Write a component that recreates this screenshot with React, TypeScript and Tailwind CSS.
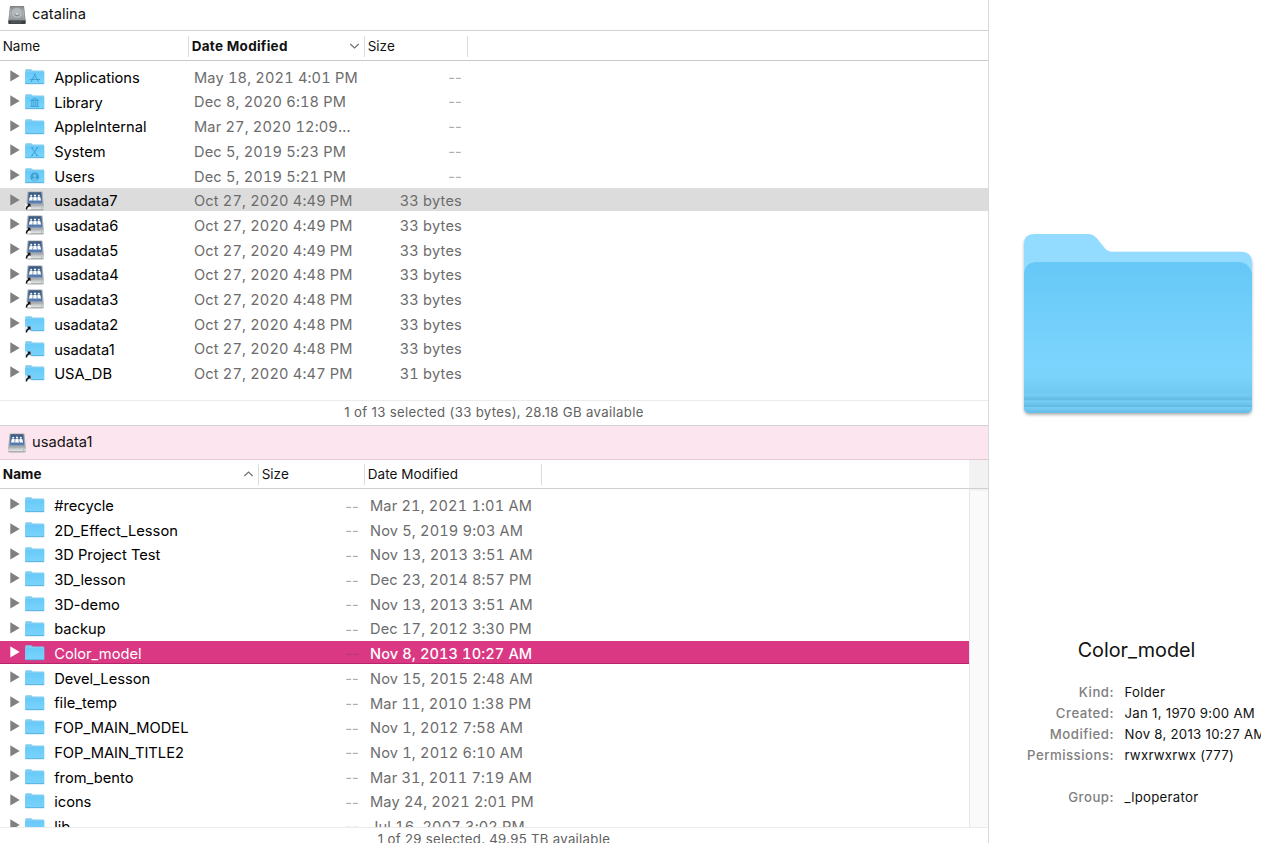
import type { ReactNode } from "react";
import clsx from "clsx";

type IconKind = "folder" | "apps" | "library" | "system" | "users" | "server";

interface FileItem {
  name: string;
  date: string;
  size?: string;
  icon?: IconKind;
  alias?: boolean;
}

const localFiles: FileItem[] = [
  { name: "Applications", date: "May 18, 2021 4:01 PM", icon: "apps" },
  { name: "Library", date: "Dec 8, 2020 6:18 PM", icon: "library" },
  { name: "AppleInternal", date: "Mar 27, 2020 12:09…" },
  { name: "System", date: "Dec 5, 2019 5:23 PM", icon: "system" },
  { name: "Users", date: "Dec 5, 2019 5:21 PM", icon: "users" },
  { name: "usadata7", date: "Oct 27, 2020 4:49 PM", size: "33 bytes", icon: "server", alias: true },
  { name: "usadata6", date: "Oct 27, 2020 4:49 PM", size: "33 bytes", icon: "server", alias: true },
  { name: "usadata5", date: "Oct 27, 2020 4:49 PM", size: "33 bytes", icon: "server", alias: true },
  { name: "usadata4", date: "Oct 27, 2020 4:48 PM", size: "33 bytes", icon: "server", alias: true },
  { name: "usadata3", date: "Oct 27, 2020 4:48 PM", size: "33 bytes", icon: "server", alias: true },
  { name: "usadata2", date: "Oct 27, 2020 4:48 PM", size: "33 bytes", alias: true },
  { name: "usadata1", date: "Oct 27, 2020 4:48 PM", size: "33 bytes", alias: true },
  { name: "USA_DB", date: "Oct 27, 2020 4:47 PM", size: "31 bytes", alias: true },
];

const remoteFiles: FileItem[] = [
  { name: "#recycle", date: "Mar 21, 2021 1:01 AM" },
  { name: "2D_Effect_Lesson", date: "Nov 5, 2019 9:03 AM" },
  { name: "3D Project Test", date: "Nov 13, 2013 3:51 AM" },
  { name: "3D_lesson", date: "Dec 23, 2014 8:57 PM" },
  { name: "3D-demo", date: "Nov 13, 2013 3:51 AM" },
  { name: "backup", date: "Dec 17, 2012 3:30 PM" },
  { name: "Color_model", date: "Nov 8, 2013 10:27 AM" },
  { name: "Devel_Lesson", date: "Nov 15, 2015 2:48 AM" },
  { name: "file_temp", date: "Mar 11, 2010 1:38 PM" },
  { name: "FOP_MAIN_MODEL", date: "Nov 1, 2012 7:58 AM" },
  { name: "FOP_MAIN_TITLE2", date: "Nov 1, 2012 6:10 AM" },
  { name: "from_bento", date: "Mar 31, 2011 7:19 AM" },
  { name: "icons", date: "May 24, 2021 2:01 PM" },
  { name: "lib", date: "Jul 16, 2007 3:02 PM" },
];

function Gradients() {
  return (
    <svg className="absolute size-0" aria-hidden="true">
      <defs>
        <linearGradient id="folder-front" x1="0" y1="0" x2="0" y2="1">
          <stop offset="0" stopColor="#68caf8" />
          <stop offset="1" stopColor="#7ad4fc" />
        </linearGradient>
        <linearGradient id="drive-blue" x1="0" y1="0" x2="0" y2="1">
          <stop offset="0" stopColor="#39587f" />
          <stop offset="1" stopColor="#5b83b8" />
        </linearGradient>
        <linearGradient id="drive-base" x1="0" y1="0" x2="0" y2="1">
          <stop offset="0" stopColor="#b9bcbf" />
          <stop offset="0.6" stopColor="#dfe1e2" />
          <stop offset="1" stopColor="#8f9294" />
        </linearGradient>
        <linearGradient id="disk-top" x1="0" y1="0" x2="0" y2="1">
          <stop offset="0" stopColor="#85898b" />
          <stop offset="0.5" stopColor="#b4b9bb" />
          <stop offset="1" stopColor="#8b9092" />
        </linearGradient>
      </defs>
    </svg>
  );
}

function AliasArrow() {
  return (
    <>
      <path d="M0.3 12.4h5.6v6.2h-5.6z" fill="#fff" opacity="0.75" />
      <path d="M2 12.6h3.6v3.7L4.5 15.2Q2.3 16.2 2 18.4H0.6Q0.7 15.5 3.2 14Z" fill="#111" />
    </>
  );
}

function FolderIcon({ kind, alias }: { kind: IconKind; alias?: boolean }) {
  return (
    <svg className="shrink-0" width="20" height="20" viewBox="0 0 20 20">
      <path d="M0.2 17V3.4Q0.2 2.2 1.2 2.2H6Q6.8 2.2 7.2 3L7.6 3.6H18.2Q19.2 3.6 19.2 4.6V17Z" fill="#7fcdf0" />
      <path d="M0.2 5.1H19.2V16.2Q19.2 17.1 18.2 17.1H1.2Q0.2 17.1 0.2 16.2Z" fill="url(#folder-front)" />
      <path d="M0.4 16.7H19" stroke="#55aed9" strokeWidth="0.9" />
      {kind === "apps" && (
        <g stroke="#3a9fd2" strokeWidth="1" fill="none" strokeLinecap="round">
          <path d="M10.2 7 6.2 14.6M9.2 7 13.4 14.6M5.2 12.4h9.4" />
        </g>
      )}
      {kind === "library" && (
        <path d="M5.6 8.6 9.7 6.4 13.8 8.6ZM6.8 9.4v4.4M8.8 9.4v4.4M10.8 9.4v4.4M12.8 9.4v4.4M5.4 14.4h8.6" stroke="#3a9fd2" strokeWidth="1" fill="none" />
      )}
      {kind === "system" && (
        <path d="M7 6.8 12 14.6M12.4 6.8 7 14.6M6.2 6.9h2.2M11 6.9h2.2M6 14.6h2M11 14.6h2.2" stroke="#3a9fd2" strokeWidth="1" fill="none" />
      )}
      {kind === "users" && (
        <>
          <circle cx="9.7" cy="10.8" r="4.4" fill="#3d9fd2" />
          <circle cx="9.7" cy="9.7" r="1.7" fill="#6ec5ee" />
          <path d="M6.7 13.6Q7.2 12 9.7 12T12.7 13.6Q11.5 15 9.7 15T6.7 13.6" fill="#6ec5ee" />
        </>
      )}
      {alias && <AliasArrow />}
    </svg>
  );
}

function ServerIcon({ alias }: { alias?: boolean }) {
  return (
    <svg className="shrink-0" width="20" height="20" viewBox="0 0 20 20">
      <path d="M3.4 0.6H16.6Q17.4 0.6 17.6 1.4L18.8 14.6V18Q18.8 19.2 17.6 19.2H2.4Q1.2 19.2 1.2 18V14.6L2.5 1.4Q2.6 0.6 3.4 0.6Z" fill="#a9adb1" />
      <path d="M1.2 14.8H18.8V18Q18.8 19.2 17.6 19.2H2.4Q1.2 19.2 1.2 18Z" fill="url(#drive-base)" />
      <path d="M3.6 1.2H16.4L17.4 12.6H2.6Z" fill="url(#drive-blue)" />
      <g fill="#fff">
        <circle cx="6.2" cy="4.8" r="1" />
        <circle cx="10" cy="4.6" r="1.1" />
        <circle cx="13.8" cy="4.8" r="1" />
        <path d="M3.9 9.4 4.8 6.1H7.5L8 7.5 8.6 6H11.4L12 7.5 12.5 6.1H15.2L16.1 9.4Z" />
      </g>
      <path d="M7.5 9.6 8.1 7.2M12.5 9.6 11.9 7.2" stroke="#4a6e9d" strokeWidth="0.7" />
      <circle cx="16.6" cy="17" r="0.7" fill="#7ed36b" />
      {alias && <AliasArrow />}
    </svg>
  );
}

function DiskIcon() {
  return (
    <svg className="shrink-0" width="20" height="20" viewBox="0 0 20 20">
      <path d="M3 1H17L18.6 15.4V18Q18.6 19 17.6 19H2.4Q1.4 19 1.4 18V15.4Z" fill="#777b7d" />
      <path d="M3.2 1.4H16.8L18 15.4H2Z" fill="url(#disk-top)" />
      <ellipse cx="10" cy="8" rx="5.8" ry="5.6" fill="#b3b8ba" stroke="#92979a" strokeWidth="0.7" />
      <path d="M7.4 9.2Q10 12.4 12.6 9.2" stroke="#767c7e" strokeWidth="1" fill="none" />
      <circle cx="10" cy="8.8" r="0.9" fill="#e3e6e7" />
      <path d="M1.4 15.4H18.6V18Q18.6 19 17.6 19H2.4Q1.4 19 1.4 18Z" fill="#3c4143" />
      <path d="M5 16.2v2.2M7 16.2v2.2M9 16.2v2.2M11 16.2v2.2M13 16.2v2.2" stroke="#6d7274" strokeWidth="0.8" />
    </svg>
  );
}

interface FileRowProps {
  item: FileItem;
  selected?: "gray" | "pink";
  children: ReactNode;
}

function FileRow({ item, selected, children }: FileRowProps) {
  return (
    <div className="h-[24.7px] shrink-0">
      <div
        className={clsx(
          "flex h-[23.4px] items-center",
          selected === "gray" && "bg-[#dcdcdc]",
          selected === "pink" && "border-b border-[#b52468] bg-[#da3883]",
        )}
      >
        <div className={clsx("flex w-[194px] shrink-0 items-center pl-[10px]", selected === "pink" ? "text-white" : "text-black")}>
          <svg className="mr-[5px] shrink-0" width="10" height="12" viewBox="0 0 10 12">
            <path d="M0.3 0.3 9.7 6 0.3 11.5Z" fill={selected === "pink" ? "#fff" : "#808080"} />
          </svg>
          <span className="pt-[2px]">
            {item.icon === "server" ? <ServerIcon alias={item.alias} /> : <FolderIcon kind={item.icon ?? "folder"} alias={item.alias} />}
          </span>
          <span className="ml-[9.2px] pt-[3.6px] text-[14.7px] whitespace-nowrap">{item.name}</span>
        </div>
        {children}
      </div>
    </div>
  );
}

function TitleBar({ icon, title, className }: { icon: ReactNode; title: string; className?: string }) {
  return (
    <div className={clsx("flex shrink-0 items-center border-b pl-[7px] text-[14.7px]", className)}>
      {icon}
      <span className="ml-[5px]">{title}</span>
    </div>
  );
}

function Chevron({ up }: { up?: boolean }) {
  return (
    <svg className="ml-auto mr-1" width="11" height="8" viewBox="0 0 11 8">
      <path d={up ? "M1.3 6 5.5 2 9.7 6" : "M1.3 2 5.5 6 9.7 2"} fill="none" stroke="#707070" strokeWidth="1.2" />
    </svg>
  );
}

function HeaderCell({ className, children }: { className?: string; children: ReactNode }) {
  return <div className={clsx("flex h-[21px] items-center border-r border-[#dcdcdc] pl-[2.7px]", className)}>{children}</div>;
}

function LocalPane() {
  return (
    <section className="flex h-[425px] shrink-0 flex-col">
      <TitleBar icon={<DiskIcon />} title="catalina" className="h-[31px] border-[#d2d2d2] pb-px" />
      <div className="flex h-[30px] shrink-0 items-center border-b border-[#c8c8c8] pt-px text-[13.5px]">
        <HeaderCell className="w-[189px]">Name</HeaderCell>
        <HeaderCell className="w-[176px] font-bold tracking-[0.28px]">Date Modified<Chevron /></HeaderCell>
        <HeaderCell className="w-[103px]">Size</HeaderCell>
      </div>
      <div className="flex min-h-0 flex-1 flex-col pt-[3.5px] text-[14.6px]">
        {localFiles.map((item) => (
          <FileRow key={item.name} item={item} selected={item.name === "usadata7" ? "gray" : undefined}>
            <span className="w-[171px] pt-[5px] tracking-[0.16px] whitespace-nowrap text-[#6c6c6c] tabular-nums">{item.date}</span>
            <span className={clsx("w-[97px] pt-[5px] text-right tracking-[0.2px]", item.size ? "text-[#6c6c6c] tabular-nums" : "text-[#ababab]")}>
              {item.size ?? "--"}
            </span>
          </FileRow>
        ))}
      </div>
      <div className="flex h-[25px] shrink-0 items-center justify-center border-t border-[#ebebeb] text-[13.2px] tracking-[0.34px] text-[#616161]">
        1 of 13 selected (33 bytes), 28.18 GB available
      </div>
    </section>
  );
}

function RemotePane() {
  return (
    <section className="flex min-h-0 flex-1 flex-col border-t border-[#d2d2d2]">
      <TitleBar icon={<ServerIcon />} title="usadata1" className="h-[34px] border-[#e0cbd5] bg-[#fde5f0]" />
      <div className="flex h-[29px] shrink-0 items-center border-b border-[#cfcfcf] text-[13.5px]">
        <HeaderCell className="w-[259px] font-bold tracking-[0.15px]">Name<Chevron up /></HeaderCell>
        <HeaderCell className="w-[106px]">Size</HeaderCell>
        <HeaderCell className="w-[177px] tracking-[0.06px]">Date Modified</HeaderCell>
        <div className="ml-auto h-full w-[19px] bg-[#f2f2f2]" />
      </div>
      <div className="flex h-[338px] shrink-0 overflow-hidden">
        <div className="flex flex-1 flex-col pt-[3.5px] text-[14.6px]">
          {remoteFiles.map((item) => {
            const selected = item.name === "Color_model";
            return (
              <FileRow key={item.name} item={item} selected={selected ? "pink" : undefined}>
                <span className={clsx("w-[165px] pt-[6.5px] text-right tracking-[0.2px]", selected ? "text-[#a93a70]" : "text-[#ababab]")}>--</span>
                <span
                  className={clsx(
                    "pl-[11px] whitespace-nowrap tabular-nums",
                    selected ? "pt-[6px] font-medium tracking-[0.1px] text-white" : "pt-[5.6px] tracking-[0.16px] text-[#6c6c6c]",
                  )}
                >
                  {item.date}
                </span>
              </FileRow>
            );
          })}
        </div>
        <div className="w-[19px] border-t-2 border-l border-t-[#f2f2f2] border-l-[#e6e6e6] bg-[#fafafa]" />
      </div>
      <div className="flex h-[25px] shrink-0 items-center justify-center border-t border-[#ebebeb] text-[13.2px] tracking-[0.3px] text-[#616161]">
        1 of 29 selected, 49.95 TB available
      </div>
    </section>
  );
}

function LargeFolder() {
  return (
    <svg className="mt-[228px] ml-[28px] shrink-0" width="242" height="194" viewBox="0 0 242 194">
      <defs>
        <linearGradient id="preview-front" x1="0" y1="0" x2="0" y2="1">
          <stop offset="0" stopColor="#66c8f7" />
          <stop offset="0.65" stopColor="#7bd4fd" />
          <stop offset="0.75" stopColor="#7ad3fb" />
          <stop offset="0.88" stopColor="#6fc8f0" />
          <stop offset="1" stopColor="#6bc0e8" />
        </linearGradient>
        <linearGradient id="preview-band" x1="0" y1="0" x2="0" y2="1">
          <stop offset="0" stopColor="#78cff6" />
          <stop offset="1" stopColor="#60b8e3" />
        </linearGradient>
        <clipPath id="preview-clip">
          <path d="M7 46Q8 34.5 18 34.5H223Q233 34.5 235 46V179Q235 185 229 185H13Q7 185 7 179Z" />
        </clipPath>
        <filter id="preview-shadow" x="-5%" y="-5%" width="110%" height="112%">
          <feDropShadow dx="0" dy="2" stdDeviation="1.6" floodColor="#000" floodOpacity="0.3" />
        </filter>
      </defs>
      <path
        d="M7 16Q7 6 17 6H71Q76 6 79.5 10L88 20.5Q91 23.8 95 23.8H224Q235 23.8 235 35V179Q235 185 229 185H13Q7 185 7 179Z"
        fill="#94dcff"
        filter="url(#preview-shadow)"
      />
      <g clipPath="url(#preview-clip)">
        <rect x="6" y="34" width="230" height="152" fill="url(#preview-front)" />
        <path d="M16 34.5H226" stroke="#5fc0ef" />
        <rect x="6" y="166" width="230" height="6.5" fill="url(#preview-band)" />
        <rect x="6" y="172.5" width="230" height="6.5" fill="url(#preview-band)" />
        <rect x="6" y="179" width="230" height="7" fill="url(#preview-band)" />
      </g>
    </svg>
  );
}

const details = [
  ["Kind:", "Folder"],
  ["Created:", "Jan 1, 1970 9:00 AM"],
  ["Modified:", "Nov 8, 2013 10:27 AM"],
  ["Permissions:", "rwxrwxrwx (777)"],
  ["", ""],
  ["Group:", "_lpoperator"],
];

function PreviewPane() {
  return (
    <aside className="flex w-[291px] shrink-0 flex-col">
      <LargeFolder />
      <h2 className="mt-[214px] -mr-1 text-center text-[19.8px] leading-[28px]">Color_model</h2>
      <dl className="mt-[18.5px] w-[272px] overflow-hidden text-[13.2px]">
        {details.map(([label, value], index) => (
          <div key={index} className="flex h-[21px] items-center">
            <dt className="w-[125px] shrink-0 text-right font-medium tracking-[0.5px] text-[#808080]">{label}</dt>
            <dd className="pl-[10.5px] tracking-[0.28px] whitespace-nowrap">{value}</dd>
          </div>
        ))}
      </dl>
    </aside>
  );
}

export default function App() {
  return (
    <div className="flex h-[843px] w-[1280px] overflow-hidden bg-white font-['Inter','Liberation_Sans',sans-serif] text-[#111]">
      <Gradients />
      <main className="flex w-[989px] shrink-0 flex-col border-r border-[#d9d9d9]">
        <LocalPane />
        <RemotePane />
      </main>
      <PreviewPane />
    </div>
  );
}
